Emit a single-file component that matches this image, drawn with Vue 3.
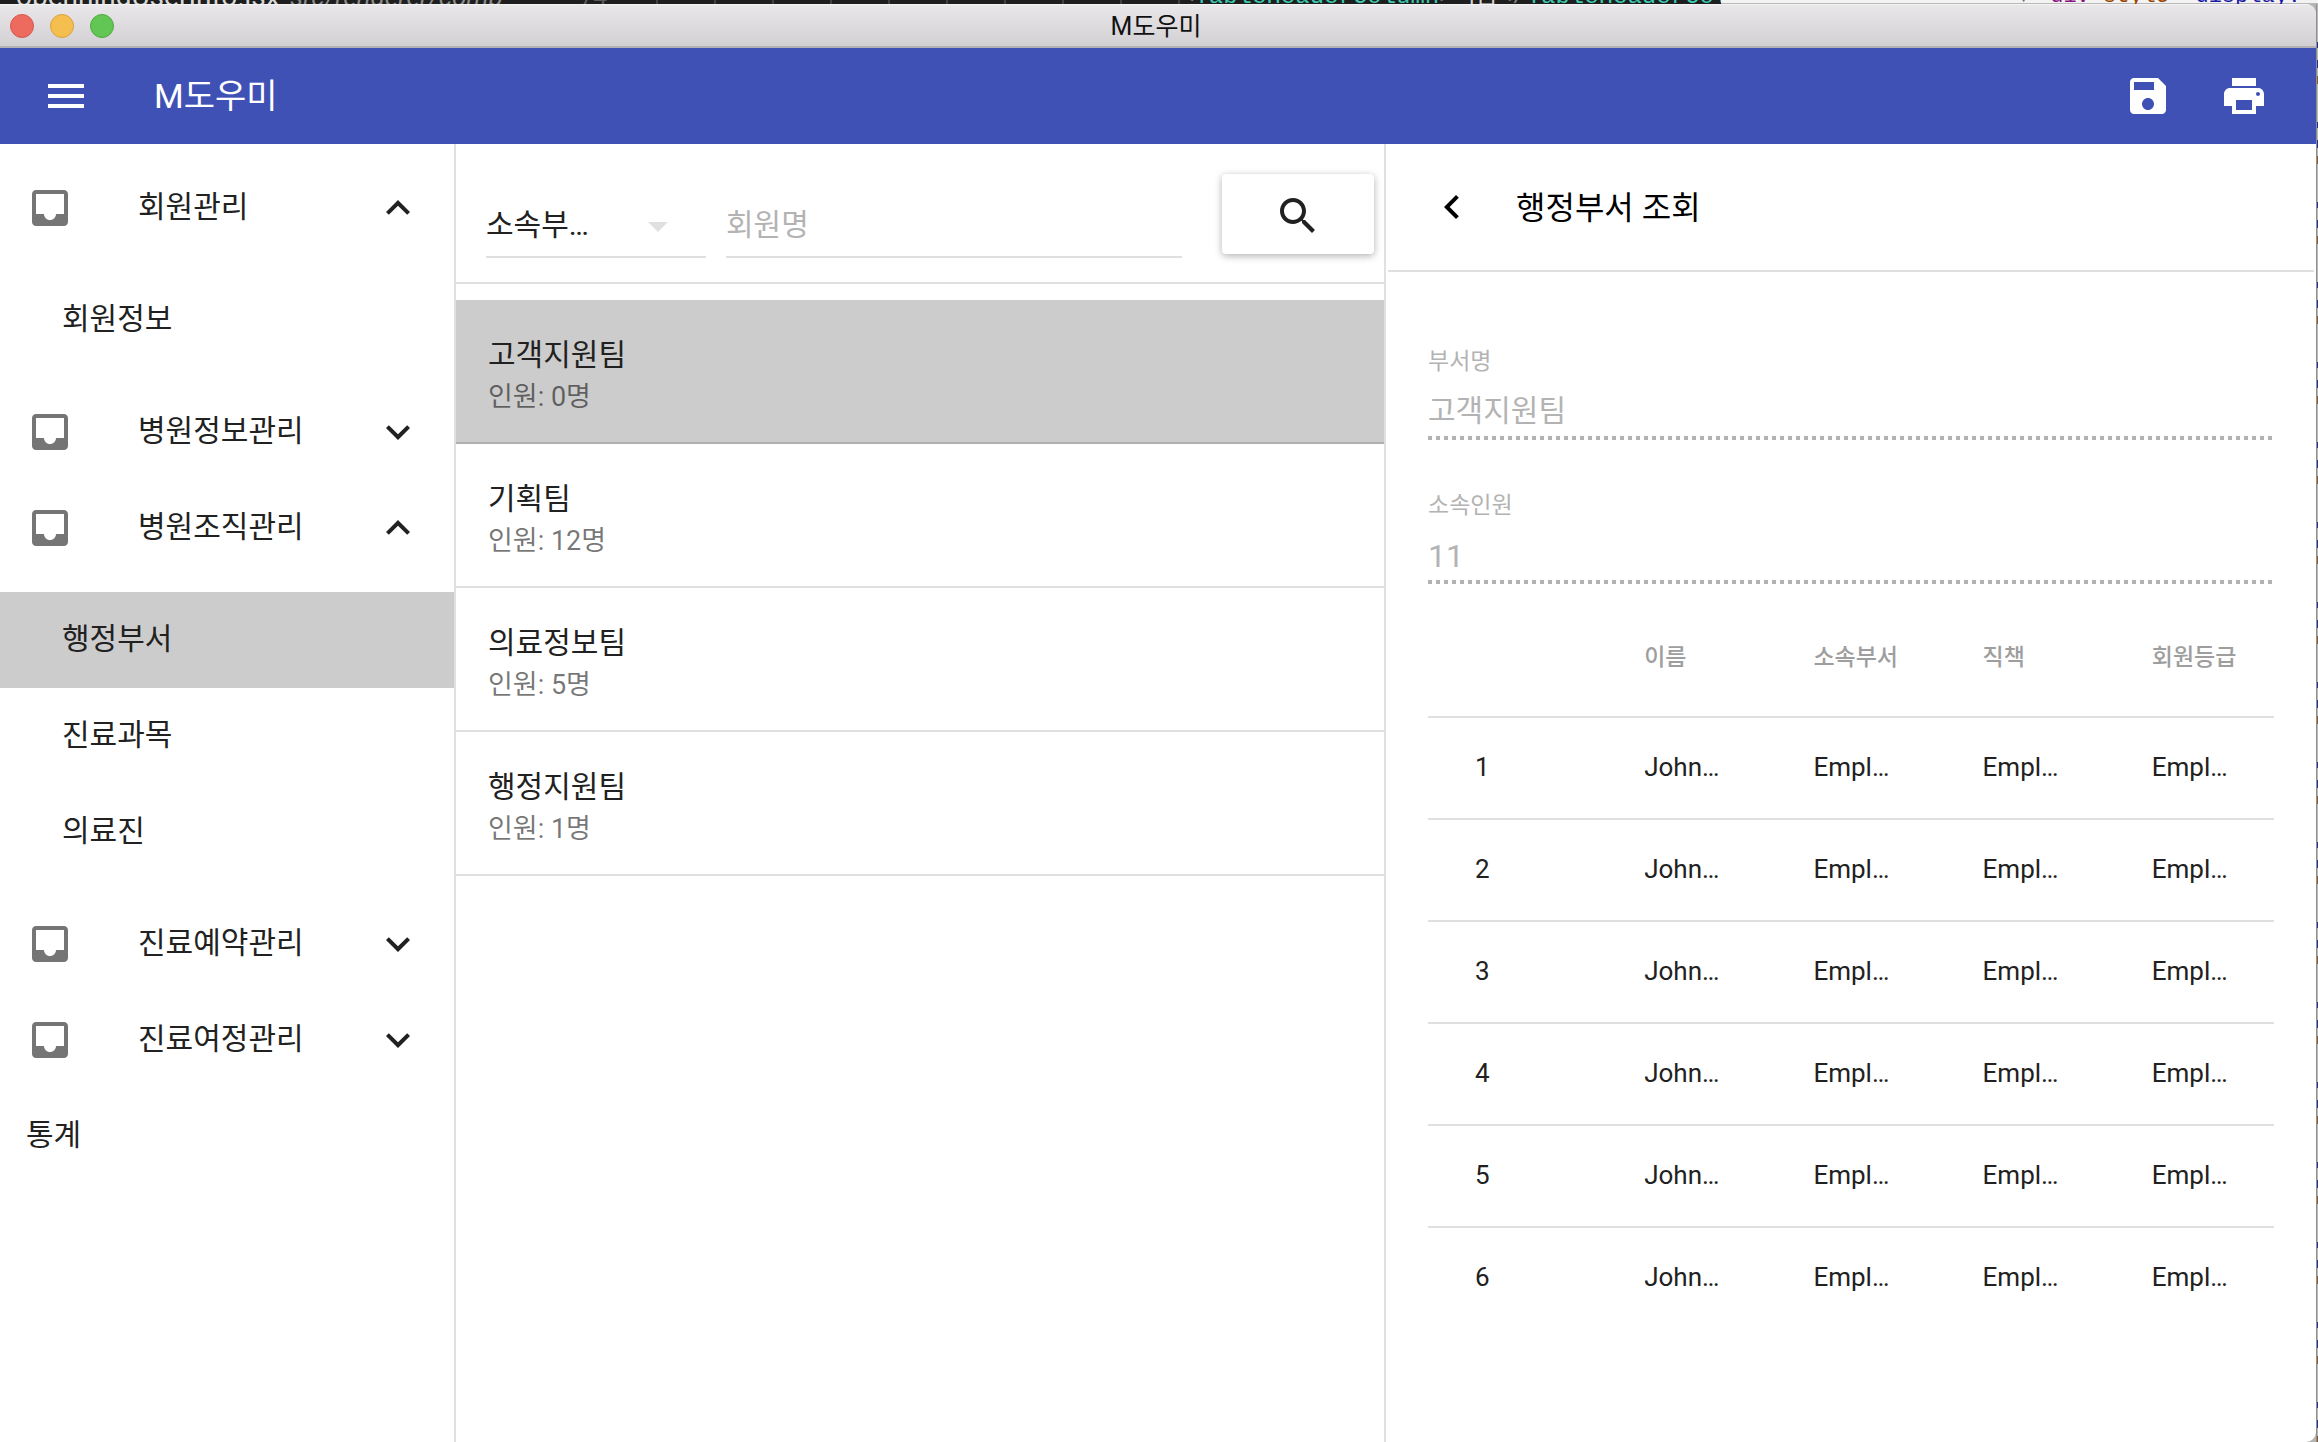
<script setup>
import { ref } from 'vue'

const up = 'M7.41 15.41L12 10.83l4.59 4.58L18 14l-6-6-6 6z'
const down = 'M7.41 8.59L12 13.17l4.59-4.58L18 10l-6 6-6-6z'

const menu = [
  { label: '회원관리', open: true, children: ['회원정보'] },
  { label: '병원정보관리', open: false, children: [] },
  { label: '병원조직관리', open: true, children: ['행정부서', '진료과목', '의료진'] },
  { label: '진료예약관리', open: false, children: [] },
  { label: '진료여정관리', open: false, children: [] },
]
const activePage = '행정부서'

const teams = [
  { name: '고객지원팀', count: 0 },
  { name: '기획팀', count: 12 },
  { name: '의료정보팀', count: 5 },
  { name: '행정지원팀', count: 1 },
]
const selected = ref(0)
const keyword = ref('')
const columns = ['', '이름', '소속부서', '직책', '회원등급']
const rows = [1, 2, 3, 4, 5, 6]
</script>

<template>
  <div class="desktop">
    <div class="behind" aria-hidden="true">
      <div class="editor">
        <span class="tab-name">openningUserInfo.jsx</span>
        <span class="tab-path">src/renderer/comp</span>
        <span class="line-no">74</span>
        <span class="guides"></span>
        <span class="code"><i>&lt;</i>TableHeaderColumn<i>&gt;</i><b>이름</b><i>&lt;/</i>TableHeaderColumn</span>
      </div>
      <div class="inspector">
        <span class="node"><i>▼</i><u>&lt;</u><b>div</b> <em>style</em><u>=</u>"display:</span>
      </div>
    </div>

    <div class="body">
      <div class="window">
        <div class="titlebar">
          <div class="lights"><span class="red"></span><span class="yellow"></span><span class="green"></span></div>
          <div class="window-title">M도우미</div>
          <div></div>
        </div>

        <header class="appbar">
          <button class="icon-btn" aria-label="메뉴">
            <svg viewBox="0 0 24 24"><path d="M3 18h18v-2H3v2zm0-5h18v-2H3v2zm0-7v2h18V6H3z" /></svg>
          </button>
          <h1>M도우미</h1>
          <button class="icon-btn" aria-label="저장">
            <svg viewBox="0 0 24 24"><path d="M17 3H5c-1.11 0-2 .9-2 2v14c0 1.1.89 2 2 2h14c1.1 0 2-.9 2-2V7l-4-4zm-5 16c-1.66 0-3-1.34-3-3s1.34-3 3-3 3 1.34 3 3-1.34 3-3 3zm3-10H5V5h10v4z" /></svg>
          </button>
          <button class="icon-btn" aria-label="인쇄">
            <svg viewBox="0 0 24 24"><path d="M19 8H5c-1.66 0-3 1.34-3 3v6h4v4h12v-4h4v-6c0-1.66-1.34-3-3-3zm-3 11H8v-5h8v5zm3-7c-.55 0-1-.45-1-1s.45-1 1-1 1 .45 1 1-.45 1-1 1zm-1-9H6v4h12V3z" /></svg>
          </button>
        </header>

        <main class="columns">
          <nav class="sidebar">
            <template v-for="group in menu" :key="group.label">
              <button class="group" :aria-expanded="group.open">
                <svg class="inbox" viewBox="0 0 24 24"><path d="M19 3H4.990c-1.110 0-1.980.9-1.980 2L3 19c0 1.100.880 2 1.990 2H19c1.100 0 2-.9 2-2V5c0-1.100-.9-2-2-2zm0 12h-4c0 1.660-1.340 3-3 3s-3-1.340-3-3H4.990V5H19v10z" /></svg>
                <span>{{ group.label }}</span>
                <svg viewBox="0 0 24 24"><path :d="group.open ? up : down" /></svg>
              </button>
              <div v-if="group.open" class="sub">
                <a v-for="child in group.children" :key="child" href="#" :class="{ active: child === activePage }">{{ child }}</a>
              </div>
            </template>
            <a href="#" class="plain">통계</a>
          </nav>

          <section class="list-pane">
            <form class="search" @submit.prevent>
              <div class="select-wrap">
                <select aria-label="검색 구분"><option>소속부…</option></select>
                <svg class="caret" viewBox="0 0 24 24"><path d="M7 10l5 5 5-5z" /></svg>
              </div>
              <input v-model="keyword" type="text" placeholder="회원명" aria-label="회원명" />
              <button class="search-btn" aria-label="검색">
                <svg viewBox="0 0 24 24"><path d="M15.5 14h-.79l-.28-.27C15.41 12.59 16 11.11 16 9.5 16 5.91 13.090 3 9.500 3S3 5.910 3 9.500 5.910 16 9.500 16c1.610 0 3.090-.59 4.230-1.570l.27.28v.79l5 4.990L20.490 19l-4.990-5zm-6 0C7.010 14 5 11.990 5 9.500S7.010 5 9.500 5 14 7.010 14 9.500 11.990 14 9.500 14z" /></svg>
              </button>
            </form>
            <ul class="teams">
              <li v-for="(team, i) in teams" :key="team.name">
                <button :class="{ active: i === selected }" @click="selected = i">
                  <span class="team-name">{{ team.name }}</span>
                  <span class="team-count">인원: {{ team.count }}명</span>
                </button>
              </li>
            </ul>
          </section>

          <section class="detail">
            <div class="detail-head">
              <button class="icon-btn" aria-label="뒤로">
                <svg viewBox="0 0 24 24"><path d="M15.410 7.410L14 6l-6 6 6 6 1.410-1.410L10.830 12z" /></svg>
              </button>
              <h2>행정부서 조회</h2>
            </div>
            <div class="detail-body">
              <div class="field">
                <label for="dept">부서명</label>
                <input id="dept" type="text" value="고객지원팀" disabled />
              </div>
              <div class="field number">
                <label for="people">소속인원</label>
                <input id="people" type="text" value="11" disabled />
              </div>
              <table>
                <thead>
                  <tr><th v-for="c in columns" :key="c">{{ c }}</th></tr>
                </thead>
                <tbody>
                  <tr v-for="n in rows" :key="n">
                    <td>{{ n }}</td>
                    <td>John Smith</td>
                    <td>Employed</td>
                    <td>Employed</td>
                    <td>Employed</td>
                  </tr>
                </tbody>
              </table>
            </div>
          </section>
        </main>
      </div>
      <div class="edge" aria-hidden="true"></div>
    </div>
  </div>
</template>

<style>
body {
  margin: 0;
}
</style>

<style scoped>
* {
  box-sizing: border-box;
}
.desktop {
  min-height: 100vh;
  display: flex;
  flex-direction: column;
  font-family: Roboto, "Noto Sans CJK KR", sans-serif;
  font-size: 30px;
  color: #212121;
  background: #b4b4b4;
}
button,
input,
select {
  font: inherit;
  color: inherit;
  border: 0;
  background: none;
  padding: 0;
  margin: 0;
  border-radius: 0;
  outline: 0;
}
a {
  color: inherit;
  text-decoration: none;
}
svg {
  display: block;
  width: 48px;
  height: 48px;
  flex: none;
  fill: currentColor;
}

/* code editor and inspector peeking out behind the window */
.behind {
  display: grid;
  grid-template-columns: minmax(0, 1721fr) minmax(0, 597fr);
  height: 4px;
  overflow: hidden;
  font-size: 24px;
  line-height: 24px;
  white-space: pre;
}
.editor {
  display: flex;
  align-items: flex-end;
  height: 4px;
  overflow: hidden;
  background: #1e1e1e;
  padding-left: 16px;
}
.editor span {
  flex: none;
  margin-bottom: -5px;
}
.tab-name {
  width: 274px;
  font-size: 28px;
  color: #d8d8d8;
}
.tab-path {
  width: 290px;
  font-size: 26px;
  font-style: italic;
  color: #8c8c8c;
}
.line-no {
  width: 76px;
  color: #5a5a5a;
}
.editor .guides {
  width: 524px;
  height: 24px;
  background: repeating-linear-gradient(90deg, #404040 0 2px, transparent 2px 58px);
}
.code,
.node {
  font-family: "Liberation Mono", "Noto Sans CJK KR", monospace;
  color: #3dc9b0;
}
.code i {
  font-style: normal;
  color: #808080;
}
.code b {
  font-weight: 400;
  color: #d4d4d4;
}
.inspector {
  display: flex;
  align-items: flex-end;
  height: 4px;
  overflow: hidden;
  padding-left: 296px;
  background: linear-gradient(#f3f3f3 0 3px, #b8b8b8 3px);
}
.node {
  font-size: 22px;
  margin-bottom: -5px;
  color: #1a1aa6;
}
.node i {
  display: inline-block;
  width: 20px;
  font-style: normal;
  color: #6e6e6e;
}
.node u {
  text-decoration: none;
  color: #a894a6;
}
.node b {
  font-weight: 400;
  color: #881280;
}
.node em {
  font-style: normal;
  color: #994500;
}

.body {
  flex: 1;
  display: flex;
}
.edge {
  width: 2px;
  background:
    linear-gradient(90deg, #8f8f8f 0 1px, transparent 1px),
    repeating-linear-gradient(#b9b9b9 0 38px, #2a2a9a 38px 44px, #b9b9b9 44px 56px, #2a2a9a 56px 64px, #b9b9b9 64px 72px, #8a5a2a 72px 80px);
}
.window {
  flex: 1;
  min-width: 0;
  display: flex;
  flex-direction: column;
  overflow: hidden;
  background: #fff;
  border-radius: 0 10px 10px 0;
}

.titlebar {
  display: grid;
  grid-template-columns: 1fr auto 1fr;
  align-items: center;
  height: 44px;
  padding: 0 14px 0 10px;
  background: linear-gradient(#e9e7ea, #d2d0d3);
  border-top: 1px solid #f5f4f5;
  border-bottom: 2px solid #b3b1b4;
}
.window-title {
  padding-top: 2px;
  font-size: 25px;
  line-height: 32px;
  color: #111;
}
.lights {
  display: flex;
  gap: 16px;
}
.lights span {
  width: 24px;
  height: 24px;
  border-radius: 50%;
  border: 1px solid;
}
.lights .red {
  background: #ed6a5e;
  border-color: #d8574c;
}
.lights .yellow {
  background: #f5bf4f;
  border-color: #d9a23b;
}
.lights .green {
  background: #62c655;
  border-color: #4faa3f;
}

.appbar {
  display: flex;
  align-items: center;
  gap: 48px;
  height: 96px;
  padding: 0 48px 0 42px;
  background: #3f51b5;
  color: #fff;
}
.appbar h1 {
  flex: 1;
  margin: 0 0 0 16px;
  font-size: 34px;
  line-height: 48px;
  font-weight: 400;
}

.columns {
  flex: 1;
  display: grid;
  grid-template-columns: 456px 1fr 1fr;
}

.sidebar {
  border-right: 2px solid #e0e0e0;
  padding-top: 16px;
}
.group {
  display: flex;
  align-items: center;
  width: 100%;
  height: 96px;
  padding: 0 32px 0 26px;
  text-align: left;
}
.group span {
  flex: 1;
  padding: 0 0 8px 64px;
}
.inbox {
  fill: #757575;
}
.sub {
  padding: 16px 0;
}
.sub a,
.plain {
  display: flex;
  align-items: center;
  height: 96px;
  padding: 0 0 8px 62px;
}
.plain {
  padding-left: 26px;
}
.sub .active,
.teams .active {
  background: #ccc;
}

.list-pane {
  border-right: 2px solid #e0e0e0;
}
.search {
  display: flex;
  height: 140px;
  padding: 30px 10px 0 30px;
  border-bottom: 2px solid #e0e0e0;
}
.select-wrap {
  position: relative;
  width: 220px;
  margin-right: 20px;
}
.search select,
.search input {
  height: 84px;
  padding: 18px 0 0;
  border-bottom: 2px solid #e0e0e0;
}
.search select {
  width: 100%;
  appearance: none;
}
.caret {
  position: absolute;
  right: 24px;
  top: 28px;
  fill: #e0e0e0;
  pointer-events: none;
}
.search input {
  flex: 1;
  min-width: 0;
  margin-right: 40px;
}
.search input::placeholder {
  color: #b3b3b3;
  opacity: 1;
}
.search-btn {
  width: 152px;
  height: 80px;
  padding-top: 4px;
  display: flex;
  align-items: center;
  justify-content: center;
  background: #fff;
  border-radius: 4px;
  box-shadow: 0 2px 10px rgba(0, 0, 0, 0.16), 0 2px 6px rgba(0, 0, 0, 0.16);
}

.teams {
  list-style: none;
  margin: 0;
  padding: 16px 0 0;
}
.teams button {
  display: flex;
  flex-direction: column;
  justify-content: center;
  width: 100%;
  height: 144px;
  padding: 8px 0 0 32px;
  text-align: left;
  border-bottom: 2px solid #e0e0e0;
}
.teams .active {
  border-color: #b0b0b0;
}
.team-name {
  line-height: 44px;
}
.team-count {
  font-size: 27px;
  line-height: 40px;
  color: rgba(0, 0, 0, 0.54);
}

.detail {
  padding: 0 2px;
}
.detail-head {
  display: flex;
  align-items: center;
  height: 128px;
  padding-left: 40px;
  border-bottom: 2px solid #e0e0e0;
  color: #000;
}
.detail-head h2 {
  margin: 0 0 0 40px;
  padding-top: 2px;
  font-size: 32px;
  line-height: 48px;
  font-weight: 400;
}
.detail-body {
  padding: 24px 40px;
}
.field {
  display: flex;
  flex-direction: column;
  justify-content: flex-end;
  height: 144px;
  color: #b3b3b3;
}
.field label {
  font-size: 23px;
  line-height: 32px;
}
.field input {
  height: 62px;
  padding: 0 0 2px;
  background: repeating-linear-gradient(90deg, #b3b3b3 0 4px, transparent 4px 8px) left bottom / 100% 4px no-repeat;
}
.field.number input {
  padding: 6px 0 0;
  font-size: 32px;
}
table {
  width: 100%;
  margin-top: 20px;
  table-layout: fixed;
  border-collapse: separate;
  border-spacing: 0;
}
th,
td {
  height: 102px;
  padding: 0 45px 2px 47px;
  border-bottom: 2px solid #e0e0e0;
  text-align: left;
  font-size: 26px;
  font-weight: 400;
  white-space: nowrap;
  overflow: hidden;
  text-overflow: ellipsis;
}
th {
  height: 114px;
  padding: 0 0 10px 47px;
  font-size: 23px;
  font-weight: 500;
  color: #9e9e9e;
}
tbody tr:last-child td {
  border-bottom-color: transparent;
}
</style>
